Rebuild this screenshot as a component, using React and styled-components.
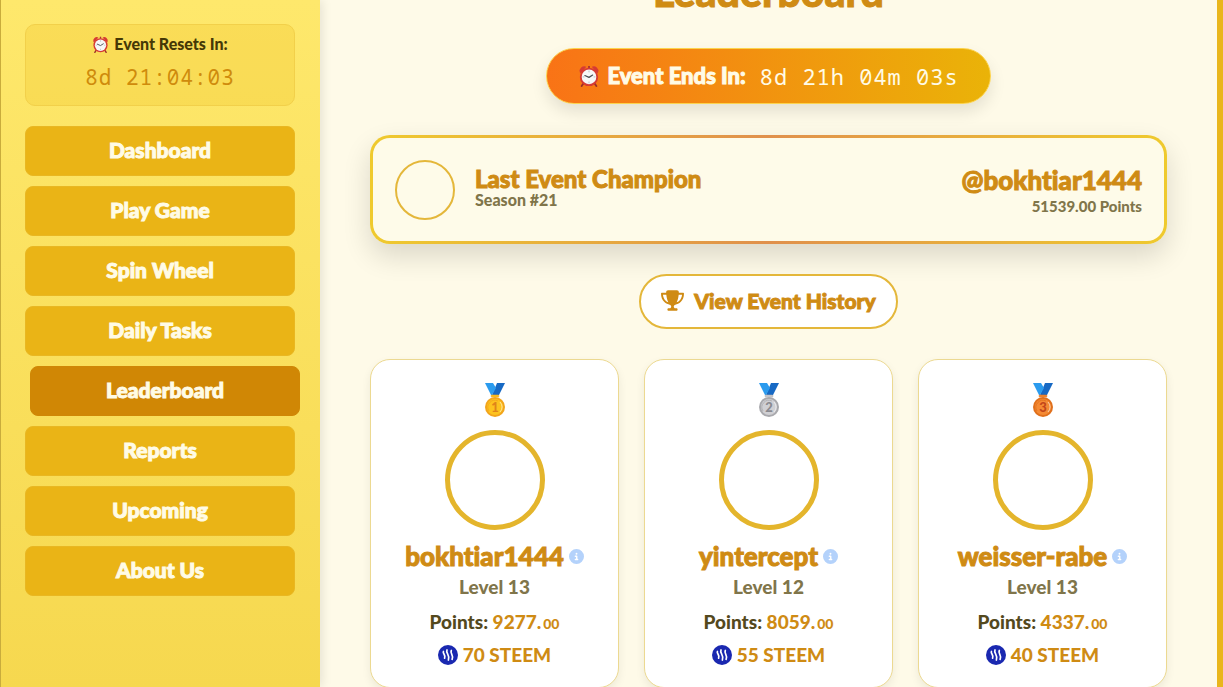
import React from 'react'
import styled, { createGlobalStyle, css } from 'styled-components'
import { FaTrophy, FaCircleInfo } from 'react-icons/fa6'

const menu = [
	'Dashboard',
	'Play Game',
	'Spin Wheel',
	'Daily Tasks',
	'Leaderboard',
	'Reports',
	'Upcoming',
	'About Us',
]

const players = [
	{ rank: 1, name: 'bokhtiar1444', level: 13, points: '9277', cents: '00', reward: 70 },
	{ rank: 2, name: 'yintercept', level: 12, points: '8059', cents: '00', reward: 55 },
	{ rank: 3, name: 'weisser-rabe', level: 13, points: '4337', cents: '00', reward: 40 },
]

const medals = {
	1: { rim: '#f2a51c', face: '#fdc31f', digit: '#e0851a' },
	2: { rim: '#a9a9ad', face: '#d0d0d4', digit: '#8a8a90' },
	3: { rim: '#e0701c', face: '#f58a34', digit: '#c2461a' },
}

const AlarmClock = ({ size }) => (
	<svg width={size} height={size} viewBox="0 0 24 24" aria-hidden="true">
		<path d="M6 20 4 23M18 20l2 3" stroke="#9b2f2a" strokeWidth="2" strokeLinecap="round" />
		<path d="M2 8a5 5 0 0 1 7-6L3 9zM22 8a5 5 0 0 0-7-6l6 7z" fill="#d63a34" />
		<path d="M12 1v3" stroke="#a33" strokeWidth="2" />
		<circle cx="12" cy="13" r="10" fill="#d63a34" />
		<circle cx="12" cy="13" r="8" fill="#f7f7f7" />
		<g stroke="#b5bcc2" strokeWidth="1">
			<path d="M12 6v2M12 18v2M5 13h2M17 13h2" />
		</g>
		<path d="M7.500 11.500 12 13.500l4-2.500" fill="none" stroke="#4a4f55" strokeWidth="1.300" strokeLinecap="round" />
	</svg>
)

const Medal = ({ rank }) => {
	const { rim, face, digit } = medals[rank]
	return (
		<svg width="22" height="36" viewBox="0 0 22 36" role="img" aria-label={'Rank ' + rank}>
			<path d="M13 1h8l-6 12H8z" fill="#1769c4" />
			<path d="M1 1h8l3 5-4 7H7z" fill="#2b9bee" />
			<rect x="7" y="13" width="8" height="2" rx="1" fill={face} stroke={rim} strokeWidth="0.600" />
			<circle cx="11" cy="25" r="10" fill={rim} />
			<circle cx="11" cy="25" r="8" fill={face} />
			<path d="M5 29a7 7 0 0 1 9-10" fill="none" stroke={rim} strokeWidth="0.800" />
			<path d="M16 20a7 7 0 0 1 0 10" fill="none" stroke="#fff" strokeOpacity="0.600" />
			<text x="11" y="30" textAnchor="middle" fontSize="13" fontWeight="900" fontFamily="Lato, sans-serif" fill={digit}>{rank}</text>
		</svg>
	)
}

const SteemLogo = () => (
	<svg width="20" height="20" viewBox="0 0 20 20" aria-hidden="true">
		<circle cx="10" cy="10" r="10" fill="#1a28b0" />
		<g fill="none" stroke="#fff" strokeWidth="1.700" strokeLinecap="round">
			<path d="M5.400 6.500c-1 2.200 2.600 3.200 1.200 6.600" />
			<path d="M9 5c-1.600 3 3.400 5 1.400 10" />
			<path d="M13.300 5.500c-1.600 3 2.800 4.500.8 8.800" />
		</g>
	</svg>
)

const App = () => {
	return (
		<Page>
			<GlobalStyle />
			<Sidebar>
				<ResetBox>
					<ResetLabel><AlarmClock size={17} />Event Resets In:</ResetLabel>
					<ResetTime>8d 21:04:03</ResetTime>
				</ResetBox>
				<Nav>
					{menu.map((item) => (
						<NavButton key={item} type="button" $active={item === 'Leaderboard'}>{item}</NavButton>
					))}
				</Nav>
			</Sidebar>
			<Main>
				<Title>Leaderboard</Title>
				<EndsIn>
					<EndsLabel><AlarmClock size={22} />Event Ends In:</EndsLabel>
					<EndsTime>8d 21h 04m 03s</EndsTime>
				</EndsIn>
				<Champion>
					<ChampionAvatar />
					<ChampionText>
						<ChampionTitle>Last Event Champion</ChampionTitle>
						<Season>Season #21</Season>
					</ChampionText>
					<ChampionScore>
						<ChampionName>@bokhtiar1444</ChampionName>
						<ChampionPoints>51539.00 Points</ChampionPoints>
					</ChampionScore>
				</Champion>
				<HistoryButton type="button"><FaTrophy />View Event History</HistoryButton>
				<Cards>
					{players.map((player) => (
						<Card key={player.rank}>
							<Medal rank={player.rank} />
							<Avatar />
							<Name>{player.name}<FaCircleInfo /></Name>
							<Level>Level {player.level}</Level>
							<Points>Points: <Amount>{player.points}.<Cents>{player.cents}</Cents></Amount></Points>
							<Reward><SteemLogo />{player.reward} STEEM</Reward>
						</Card>
					))}
				</Cards>
			</Main>
		</Page>
	)
}

const GlobalStyle = createGlobalStyle`
	* {
		box-sizing: border-box;
	}

	body {
		margin: 0;
		font-family: Lato, 'Noto Sans', sans-serif;
		font-weight: 900;
		font-variant-ligatures: none;
		background-color: #fefae8;
	}

	button {
		font: inherit;
		font-variant-ligatures: none;
		cursor: pointer;
	}

	h1, h2, p {
		margin: 0;
	}
`

const chunky = css`
	-webkit-text-stroke: 1px currentColor;
	stroke-linejoin: round;
`

const Page = styled.div`
	display: flex;
	height: 100vh;
	overflow: hidden;
	border-right: 6px solid #e9b61c;
`

const Sidebar = styled.aside`
	flex: 0 0 320px;
	padding: 24px 25px;
	border-left: 1px solid #c9ac3c;
	padding-left: 24px;
	background: linear-gradient(to bottom, #fee86c, #f6d84f);
	box-shadow: 2px 0 10px rgba(0,0,0,0.1);
`

const ResetBox = styled.div`
	height: 82px;
	padding: 9px;
	border: 1px solid #f2d04a;
	border-radius: 10px;
	background-color: rgba(234,179,8,0.2);
	text-align: center;
`

const ResetLabel = styled.p`
	display: flex;
	align-items: center;
	justify-content: center;
	gap: 5px;
	font-size: 16px;
	line-height: 20px;
	color: #453806;
`

const ResetTime = styled.p`
	margin-top: 9px;
	font-family: 'Noto Sans Mono', 'DejaVu Sans Mono', monospace;
	font-size: 21px;
	font-weight: 400;
	line-height: 28px;
	letter-spacing: 1px;
	color: #cf8b0c;
`

const Nav = styled.nav`
	display: flex;
	flex-direction: column;
	gap: 10px;
	margin-top: 20px;
`

const NavButton = styled.button`
	${chunky}
	height: 50px;
	padding: 0 0 3px;
	border: 1px solid ${({ $active }) => $active ? '#d08705' : '#e9b722'};
	border-radius: 8px;
	background-color: ${({ $active }) => $active ? '#d08705' : '#eab416'};
	color: #fffbe6;
	font-size: 21px;
	transform: ${({ $active }) => $active ? 'translateX(5px)' : 'none'};
`

const Main = styled.main`
	flex: 1;
	display: flex;
	flex-direction: column;
	align-items: center;
	min-width: 0;
	padding: 0 50px;
`

const Title = styled.h1`
	${chunky}
	flex-shrink: 0;
	margin-top: -32px;
	margin-bottom: 32px;
	font-size: 41px;
	font-weight: 900;
	line-height: 48px;
	color: #cf8b14;
`

const EndsIn = styled.div`
	display: flex;
	flex-shrink: 0;
	align-items: center;
	gap: 14px;
	height: 56px;
	padding: 0 31px;
	border: 1px solid #fcd34d;
	border-radius: 28px;
	background: linear-gradient(to right, #f97316, #eab308);
	box-shadow: 0 8px 16px rgba(0,0,0,0.1);
	color: #fffbe6;
`

const EndsLabel = styled.span`
	${chunky}
	display: flex;
	align-items: center;
	gap: 7px;
	font-size: 22px;
	line-height: 24px;
`

const EndsTime = styled.span`
	font-family: 'Noto Sans Mono', 'DejaVu Sans Mono', monospace;
	font-size: 22px;
	font-weight: 400;
	letter-spacing: 1px;
`

const Champion = styled.section`
	display: flex;
	flex-shrink: 0;
	align-items: center;
	gap: 20px;
	width: 100%;
	height: 109px;
	margin-top: 31px;
	padding: 0 22px;
	border: 3px solid transparent;
	border-radius: 20px;
	background:
		linear-gradient(#fefbe9, #fefbe9) padding-box,
		linear-gradient(to right, #efca2e, #e0904c 50%, #efca2e) border-box;
	box-shadow: 0 12px 28px rgba(0,0,0,0.14);
`

const ChampionAvatar = styled.div`
	width: 60px;
	height: 60px;
	border: 2px solid #e4b73a;
	border-radius: 50%;
`

const ChampionText = styled.div`
	flex: 1;
	padding-bottom: 4px;
`

const ChampionTitle = styled.h2`
	${chunky}
	font-size: 24px;
	font-weight: 900;
	line-height: 24px;
	color: #cf8b14;
`

const Season = styled.p`
	font-size: 16px;
	line-height: 18px;
	color: #80754a;
`

const ChampionScore = styled.div`
	text-align: right;
`

const ChampionName = styled.p`
	${chunky}
	font-size: 26px;
	line-height: 32px;
	color: #cf8b14;
`

const ChampionPoints = styled(Season)`
	font-size: 15px;
	line-height: 20px;
`

const HistoryButton = styled.button`
	display: flex;
	flex-shrink: 0;
	align-items: center;
	gap: 10px;
	height: 55px;
	margin-top: 30px;
	padding: 0 20px 2px;
	border: 2px solid #e4b73a;
	border-radius: 28px;
	background-color: #fff;
	color: #cf8b14;
	font-size: 21px;
	${chunky}

	svg {
		width: 23px;
		height: 21px;
	}
`

const Cards = styled.div`
	display: grid;
	flex-shrink: 0;
	grid-template-columns: repeat(3, 1fr);
	gap: 25px;
	width: 100%;
	margin-top: 30px;
`

const Card = styled.article`
	display: flex;
	flex-direction: column;
	align-items: center;
	padding: 22px 10px 20px;
	border: 1px solid #ecd991;
	border-radius: 20px;
	background-color: #fff;
	box-shadow: 0 4px 10px rgba(0,0,0,0.07);
`

const Avatar = styled.div`
	width: 100px;
	height: 100px;
	margin-top: 12px;
	border: 5px solid #e4b52c;
	border-radius: 50%;
`

const Name = styled.h2`
	${chunky}
	display: flex;
	align-items: center;
	gap: 5px;
	margin-top: 10px;
	font-size: 26px;
	font-weight: 900;
	line-height: 32px;
	color: #cf8b14;

	svg {
		width: 15px;
		height: 15px;
		color: #b4d2fb;
	}
`

const Level = styled.p`
	margin-top: 3px;
	font-size: 19px;
	line-height: 24px;
	color: #80754a;
`

const Points = styled.p`
	margin-top: 11px;
	font-size: 19px;
	line-height: 24px;
	color: #54491d;
`

const Amount = styled.span`
	color: #cf8b14;
`

const Cents = styled.small`
	margin-left: 2px;
	font-size: 14px;
`

const Reward = styled.p`
	display: flex;
	align-items: center;
	gap: 5px;
	margin-top: 7px;
	font-size: 19px;
	line-height: 24px;
	color: #cf8b14;
`

export default App
